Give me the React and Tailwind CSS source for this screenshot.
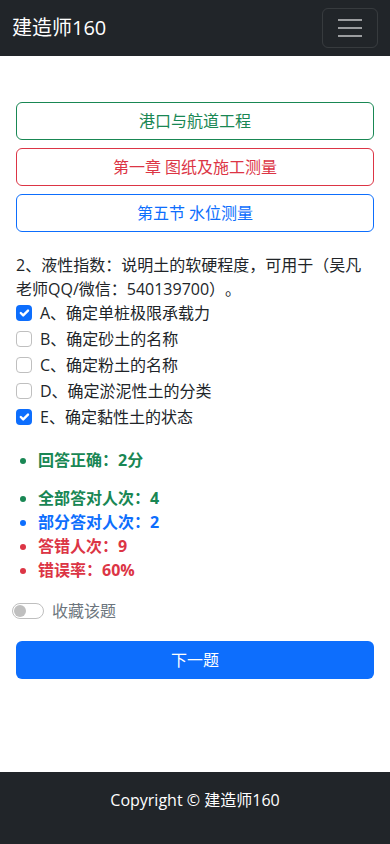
import React, { useState } from 'react';

const font = { fontFamily: '"Open Sans", "Noto Sans CJK SC", sans-serif' };

const options = [
    { key: 'A', text: 'A、确定单桩极限承载力', checked: true },
    { key: 'B', text: 'B、确定砂土的名称', checked: false },
    { key: 'C', text: 'C、确定粉土的名称', checked: false },
    { key: 'D', text: 'D、确定淤泥性土的分类', checked: false },
    { key: 'E', text: 'E、确定黏性土的状态', checked: true },
];

function Check({ checked }) {
    if (checked) {
        return (
            <span className="flex h-4 w-4 shrink-0 items-center justify-center rounded-[4px] bg-[#0d6efd]">
                <svg viewBox="0 0 20 20" className="h-4 w-4">
                    <path d="M6 10l3 3 6-6" fill="none" stroke="#fff" strokeWidth="3" strokeLinecap="round" strokeLinejoin="round" />
                </svg>
            </span>
        );
    }
    return <span className="h-4 w-4 shrink-0 rounded-[4px] border border-[#bfbfbf] bg-white" />;
}

export default function App() {
    const [fav, setFav] = useState(false);

    return (
        <div className="flex min-h-screen flex-col bg-white text-[#212529] [text-spacing-trim:space-all]" style={font}>
            <nav className="flex h-14 items-center justify-between bg-[#212529] px-3">
                <span className="text-xl leading-[30px] text-white">建造师160</span>
                <button type="button" className="flex h-10 w-14 flex-col items-center justify-center gap-[6px] rounded-md border border-white/10">
                    <span className="block h-[2px] w-6 bg-white/55" />
                    <span className="block h-[2px] w-6 bg-white/55" />
                    <span className="block h-[2px] w-6 bg-white/55" />
                </button>
            </nav>

            <main className="flex-1 px-4 pt-[46px]">
                <div className="flex flex-col gap-2">
                    <button className="flex h-[38px] w-full items-center justify-center rounded-md border border-[#198754] text-base text-[#198754]">港口与航道工程</button>
                    <button className="flex h-[38px] w-full items-center justify-center rounded-md border border-[#dc3545] text-base text-[#dc3545]">第一章 图纸及施工测量</button>
                    <button className="flex h-[38px] w-full items-center justify-center rounded-md border border-[#0d6efd] text-base text-[#0d6efd]">第五节 水位测量</button>
                </div>

                <p className="mt-[21px] text-base leading-6">2、液性指数：说明土的软硬程度，可用于（吴凡老师QQ/微信：540139700）。</p>

                <div className="flex flex-col gap-[2px]">
                    {options.map(o => (
                        <label key={o.key} className="flex h-6 items-center gap-2 text-base leading-6">
                            <Check checked={o.checked} />
                            <span>{o.text}</span>
                        </label>
                    ))}
                </div>

                <ul className="mt-[19px] list-disc pl-[22px] text-base font-bold leading-6 text-[#198754]">
                    <li>回答正确：2分</li>
                </ul>

                <ul className="mt-[14px] list-disc pl-[22px] text-base font-bold leading-6">
                    <li className="text-[#198754]">全部答对人次：4</li>
                    <li className="text-[#0d6efd]">部分答对人次：2</li>
                    <li className="text-[#dc3545]">答错人次：9</li>
                    <li className="text-[#dc3545]">错误率：60%</li>
                </ul>

                <div className="mt-[17px] -ml-1 flex h-6 items-center gap-2">
                    <button
                        type="button"
                        onClick={() => setFav(!fav)}
                        className="flex h-4 w-8 items-center rounded-full border border-[#bfbfbf] px-[1px]"
                    >
                        <span className="h-3 w-3 rounded-full bg-[#bfbfbf]" />
                    </button>
                    <span className="text-base leading-6 text-[#6c757d]">收藏该题</span>
                </div>

                <button className="mt-[18px] flex h-[38px] w-full items-center justify-center rounded-md bg-[#0d6efd] text-base text-white">下一题</button>
            </main>

            <footer className="bg-[#212529] pb-8 pt-4 text-center text-base leading-6 text-white">
                Copyright © 建造师160
            </footer>
        </div>
    );
}
